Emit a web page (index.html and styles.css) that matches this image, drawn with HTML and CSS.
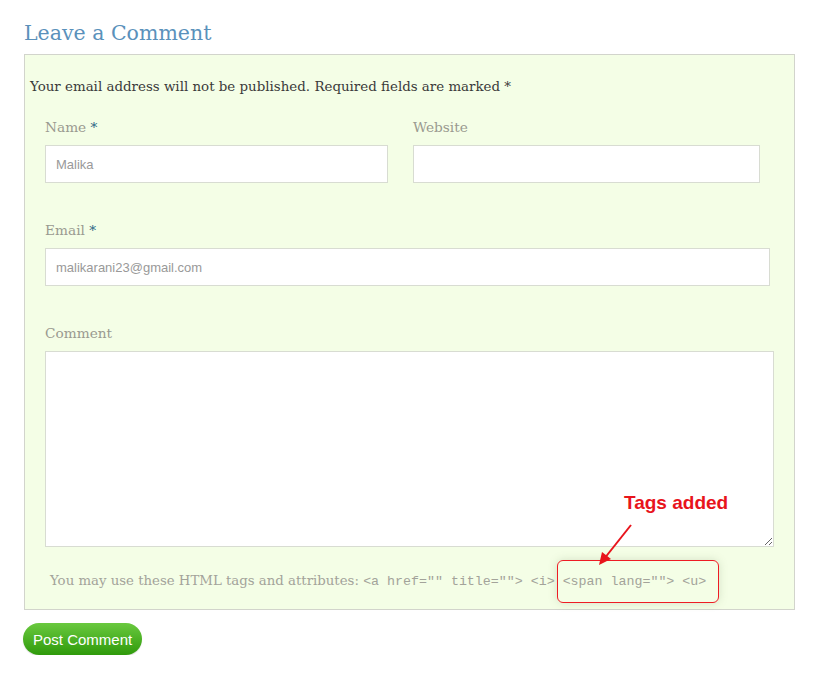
FILE: index.html
```html
<!DOCTYPE html>
<html lang="en">
<head>
  <meta charset="UTF-8">
  <title>Leave a Comment</title>
  <link rel="stylesheet" href="styles.css">
</head>
<body>
  <section class="respond">
    <h3 class="reply-title">Leave a Comment</h3>

    <form class="comment-form">
      <p class="notes">Your email address will not be published. Required fields are marked *</p>

      <div class="row">
        <div class="field field-author">
          <label>Name <span class="required">*</span></label>
          <input type="text" value="Malika">
        </div>
        <div class="field field-url">
          <label>Website</label>
          <input type="text" value="">
        </div>
      </div>

      <div class="field field-email">
        <label>Email <span class="required">*</span></label>
        <input type="text" value="malikarani23@gmail.com">
      </div>

      <div class="field field-comment">
        <label>Comment</label>
        <textarea></textarea>
      </div>

      <p class="allowed-tags">You may use these HTML tags and attributes: <code>&lt;a href="" title=""&gt; &lt;i&gt; <span class="added">&lt;span lang=""&gt; &lt;u&gt;</span></code></p>

      <div class="note">
        <span class="note-text">Tags added</span>
        <svg class="note-arrow" width="40" height="44" viewBox="0 0 40 44">
          <line x1="35" y1="2" x2="8" y2="36" stroke="#e8141c" stroke-width="2"/>
          <polygon points="3,42 6,29 15,36" fill="#e8141c"/>
        </svg>
      </div>
    </form>

    <button class="submit">Post Comment</button>
  </section>
</body>
</html>
```

FILE: styles.css
```css
* {
  margin: 0;
  padding: 0;
  box-sizing: border-box;
}

body {
  background: #ffffff;
  padding: 0 24px;
  font: 14px 'DejaVu Serif', serif;
  color: #333333;
}

.respond {
  width: 771px;
}

.reply-title {
  padding-top: 18px;
  margin-bottom: 6px;
  font-size: 20.5px;
  line-height: 30px;
  font-weight: 400;
  color: #5a91bb;
}

.comment-form {
  position: relative;
  background: #f4fee6;
  border: 1px solid #d2d4cc;
  padding: 21px 5px 17px;
}

.notes {
  font-size: 13.4px;
  line-height: 22px;
  color: #3a3a3a;
}

.required {
  color: #2b6585;
}

.row {
  display: flex;
  gap: 25px;
  margin-left: 15px;
}

.field {
  margin: 19px 0 0 15px;
}

.row .field {
  margin-left: 0;
}

.field-email {
  margin-top: 37px;
}

.field-comment {
  margin-top: 37px;
}

.field label {
  display: block;
  font-size: 13.7px;
  line-height: 20px;
  margin-bottom: 8px;
  color: #9a9a90;
}

.field input,
.field textarea {
  display: block;
  height: 38px;
  padding: 0 10px;
  border: 1px solid #d8dcd2;
  background: #ffffff;
  font: 13px 'Liberation Sans', Arial, sans-serif;
  color: #999999;
  outline: 0;
}

.field-author input {
  width: 343px;
}

.field-url input {
  width: 347px;
}

.field-email input {
  width: 725px;
}

.field-comment textarea {
  width: 729px;
  height: 196px;
  resize: both;
}

.allowed-tags {
  margin: 23px 0 0 20px;
  font-size: 13.3px;
  line-height: 22px;
  color: #a3a39a;
}

.allowed-tags code {
  font: 13.3px 'Liberation Mono', 'Courier New', monospace;
  color: #a3a39a;
}

.added {
  position: relative;
  display: inline-block;
}

.added::before {
  content: "";
  position: absolute;
  left: -6px;
  right: -13px;
  top: -14px;
  bottom: -14px;
  border: 1px solid #ee1c24;
  border-radius: 6px;
  box-shadow: 0 0 8px rgba(120, 140, 100, 0.25);
}

.note {
  position: absolute;
  left: 571px;
  top: 437px;
  width: 150px;
  height: 80px;
}

.note-text {
  position: absolute;
  left: 28px;
  top: 0;
  font: bold 19px 'Liberation Sans', Arial, sans-serif;
  color: #e8141c;
}

.note-arrow {
  position: absolute;
  left: 0;
  top: 31px;
}

.submit {
  margin: 13px 0 0 -1px;
  height: 32px;
  padding: 0 10px;
  border: 0;
  border-radius: 16px;
  background: linear-gradient(#6ac93f, #2f9a0b);
  box-shadow: 0 1px 1px rgba(0, 0, 0, 0.15);
  font: 15px 'Liberation Sans', Arial, sans-serif;
  color: #ffffff;
  cursor: pointer;
}
```
